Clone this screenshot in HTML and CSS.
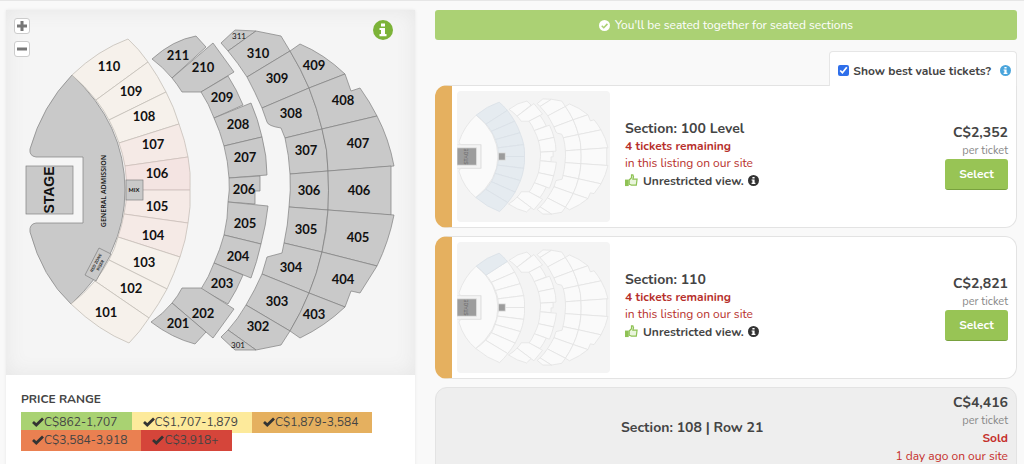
FILE: index.html
```html
<!DOCTYPE html>
<html lang="en">
<head>
  <meta charset="UTF-8">
  <meta name="viewport" content="width=device-width, initial-scale=1.0">
  <title>Select Tickets</title>
  <link rel="stylesheet" href="styles.css">
</head>
<body>
  <!-- shared shapes -->
  <svg class="sprite" width="0" height="0" aria-hidden="true">
    <defs>
      <g id="map-floor">
        <path d="M72 75 Q42 106 30 149 Q29 156 36 157 H83 V223 H36 Q29 224 30 232 Q42 277 71 304 Q125 255 125 190 Q125 124 72 75Z"/>
      </g>
      <path id="s110" d="M72 75 Q98 50 128 39 Q139 49 148 62 L96 100 Q85 86 72 75Z"/>
      <g id="map-100">
        <path d="M96 100 L148 62 Q158 76 166 92 L109 120 Q104 110 96 100Z"/>
        <path d="M109 120 L166 92 Q174 107 179 124 L119 143 Q115 131 109 120Z"/>
        <path d="M119 143 L179 124 Q185 140 188 157 L125 166 Q123 154 119 143Z"/>
        <path d="M125 166 L188 157 Q191 172 190 190 H126 Q127 178 125 166Z"/>
        <path d="M126 190 H190 Q191 207 188 223 L124 214 Q127 203 126 190Z"/>
        <path d="M124 214 L188 223 Q186 240 180 257 L118 237 Q122 226 124 214Z"/>
        <path d="M118 237 L180 257 Q174 274 167 289 L109 260 Q115 249 118 237Z"/>
        <path d="M109 260 L167 289 Q159 304 149 318 L95 281 Q103 271 109 260Z"/>
        <path d="M95 281 L149 318 Q140 332 129 343 Q99 331 71 304 Q84 294 95 281Z"/>
      </g>
      <g id="map-200">
        <path d="M152 59 Q173 40 196 36 L206 47 L172 78 Q163 67 152 59Z"/>
        <path d="M172 78 L213 43 L234 72 L201 92 H182 Q177 84 172 78Z"/>
        <path d="M201 92 L228 76 Q237 90 243 105 L214 118 Q209 104 201 92Z"/>
        <path d="M214 118 L251 103 Q258 119 262 137 L224 146 Q220 131 214 118Z"/>
        <path d="M224 146 L262 137 Q267 156 267 175 L229 178 Q228 161 224 146Z"/>
        <path d="M229 178 L260 176 V191 H255 V204 L228 202 Q230 190 229 178Z"/>
        <path d="M228 202 L268 206 Q266 225 261 244 L224 235 Q228 218 228 202Z"/>
        <path d="M224 235 L261 244 Q257 262 251 278 L214 263 Q220 250 224 235Z"/>
        <path d="M214 263 L243 275 Q237 290 228 304 L201 289 Q209 277 214 263Z"/>
        <path d="M182 288 H201 L234 309 L213 338 L172 303 Q178 296 182 288Z"/>
        <path d="M172 303 L206 332 L195 344 Q172 338 151 322 Q163 314 172 303Z"/>
      </g>
      <g id="map-300">
        <path d="M221 43 L235 30 L256 31 L228 51Z"/>
        <path d="M228 51 L256 31 L281 36 L290 51 L247 77 Q238 63 228 51Z"/>
        <path d="M247 77 L290 51 Q301 69 309 88 L262 108 Q255 92 247 77Z"/>
        <path d="M262 108 L309 88 Q317 108 322 129 L285 138 L281 128 Q268 126 267 122Z"/>
        <path d="M285 138 L322 129 Q328 150 328 171 L290 174 Q289 155 285 138Z"/>
        <path d="M290 174 L328 171 Q329 190 328 210 L289 207 Q291 190 290 174Z"/>
        <path d="M289 207 L328 210 Q326 232 322 252 L284 243 Q288 225 289 207Z"/>
        <path d="M284 243 L322 252 Q317 274 309 293 L262 274 L267 257 L282 253Z"/>
        <path d="M262 274 L309 293 Q301 313 290 331 L246 305 Q255 290 262 274Z"/>
        <path d="M246 305 L290 331 L281 345 L256 350 L228 330 Q238 319 246 305Z"/>
        <path d="M228 330 L256 350 H235 L221 337Z"/>
      </g>
      <g id="map-400">
        <path d="M290 51 L300 44 Q324 54 345 74 L309 88 Q301 69 290 51Z"/>
        <path d="M309 88 L345 74 L351 91 L360 88 Q370 102 377 116 L322 129 Q317 108 309 88Z"/>
        <path d="M322 129 L377 116 Q389 139 394 166 L328 171 Q328 150 322 129Z"/>
        <path d="M328 171 L391 166 V215 L328 210 Q329 190 328 171Z"/>
        <path d="M328 210 L394 215 Q389 241 377 266 L322 252 Q327 231 328 210Z"/>
        <path d="M322 252 L377 266 L360 293 L351 291 L345 307 L309 293 Q317 274 322 252Z"/>
        <path d="M309 293 L345 307 Q325 326 300 338 L290 331 Q301 313 309 293Z"/>
      </g>
      <g id="mini-map">
        <use href="#map-floor"/>
        <use href="#map-200"/>
        <use href="#map-300"/>
        <use href="#map-400"/>
      </g>
      <g id="mini-stage">
        <path class="mini-line" d="M26 157 H84 V223 H26"/>
        <rect class="mini-box" x="25" y="166" width="48" height="48"/>
        <text class="mini-stage-text" transform="translate(49 190) rotate(-90)">STAGE</text>
        <rect class="mini-box" x="126" y="180" width="17" height="20"/>
      </g>
      <symbol id="icon-info" viewBox="0 0 20 20">
        <circle cx="10" cy="10" r="10" fill="currentColor"/>
        <path fill="#fff" d="M8 3.5h4v3H8z M6.5 8H12v6h1.5v2.2h-7V14H8v-4H6.5z"/>
      </symbol>
      <symbol id="icon-check" viewBox="0 0 12 10">
        <path d="M1 5 L4.3 8 L11 1.5" fill="none" stroke="currentColor" stroke-width="2.8"/>
      </symbol>
      <symbol id="icon-thumb" viewBox="0 0 14 14">
        <path fill="#8fc255" d="M0 6h4v7H0z"/>
        <path fill="#e9f5dc" stroke="#8fc255" stroke-width="1.3" d="M4.5 6.5 L7 4 V1 H8.5 L9.2 3 L8.5 5.5 H13 L12.2 12 H7 L4.5 11Z"/>
      </symbol>
    </defs>
  </svg>

  <div class="top-line"></div>
  <main class="page">
    <section class="map-panel">
      <div class="map">
        <div class="zoom">
          <button type="button" aria-label="Zoom in"><svg viewBox="0 0 12 12"><path d="M6 1v10M1 6h10"/></svg></button>
          <button type="button" aria-label="Zoom out"><svg viewBox="0 0 12 12"><path d="M1 6h10"/></svg></button>
        </div>
        <button type="button" class="map-info" aria-label="Map information"><svg><use href="#icon-info"/></svg></button>
        <svg class="seats" viewBox="6 10 409 365" role="img" aria-label="Seating map">
          <g class="grey">
            <use href="#map-floor"/>
            <use href="#map-200"/>
            <use href="#map-300"/>
            <use href="#map-400"/>
          </g>
          <g class="cream">
            <use href="#s110"/>
            <use href="#map-100"/>
          </g>
          <path class="rose" d="M119 143 L179 124 Q191 155 190 190 Q191 224 180 257 L118 237 Q126 214 126 190 Q126 164 119 143Z"/>
          <path class="rose" d="M125 166 L188 157 Q191 172 190 190 H126 Q127 178 125 166Z"/>
          <g class="grey">
            <rect x="26" y="166" width="47" height="48"/>
            <rect x="126" y="180" width="17" height="20"/>
            <path d="M99 248 L111 254 L96 281 L85 275Z"/>
          </g>
          <g class="label">
            <text x="109" y="71">110</text><text x="131" y="96">109</text><text x="144" y="121">108</text>
            <text x="153" y="149">107</text><text x="157" y="178">106</text><text x="157" y="211">105</text>
            <text x="153" y="240">104</text><text x="144" y="267">103</text><text x="131" y="293">102</text><text x="106" y="317">101</text>
            <text x="178" y="60">211</text><text x="203" y="72">210</text><text x="222" y="102">209</text><text x="238" y="129">208</text>
            <text x="245" y="162">207</text><text x="244" y="194">206</text><text x="245" y="228">205</text><text x="238" y="261">204</text>
            <text x="222" y="288">203</text><text x="203" y="318">202</text><text x="178" y="328">201</text>
            <text x="258" y="58">310</text><text x="277" y="83">309</text><text x="291" y="118">308</text><text x="306" y="155">307</text>
            <text x="309" y="195">306</text><text x="306" y="234">305</text><text x="291" y="272">304</text><text x="277" y="306">303</text><text x="258" y="331">302</text>
            <text x="314" y="70">409</text><text x="343" y="105">408</text><text x="358" y="148">407</text><text x="359" y="195">406</text>
            <text x="358" y="242">405</text><text x="343" y="284">404</text><text x="314" y="319">403</text>
          </g>
          <g class="label small">
            <text x="239" y="39">311</text><text x="238" y="348">301</text>
          </g>
          <text class="stage-text" transform="translate(54 190) rotate(-90)">STAGE</text>
          <text class="ga-text" transform="translate(106 191) rotate(-90)">GENERAL ADMISSION</text>
          <text class="mix-text" x="134" y="192">MIX</text>
          <g class="riser-text" transform="translate(98 264) rotate(-62)"><text y="-1">RED ZONE</text><text y="4">RISER</text></g>
        </svg>
      </div>
      <div class="legend">
        <h2>PRICE RANGE</h2>
        <ul>
          <li class="green"><svg><use href="#icon-check"/></svg>C$862-1,707</li>
          <li class="yellow"><svg><use href="#icon-check"/></svg>C$1,707-1,879</li>
          <li class="orange"><svg><use href="#icon-check"/></svg>C$1,879-3,584</li>
          <li class="coral"><svg><use href="#icon-check"/></svg>C$3,584-3,918</li>
          <li class="red"><svg><use href="#icon-check"/></svg>C$3,918+</li>
        </ul>
      </div>
    </section>

    <section class="listings">
      <div class="notice">
        <svg viewBox="0 0 12 12"><circle cx="6" cy="6" r="6" fill="#fff"/><path d="M3 6.2l2.2 2.2 4-4.2" fill="none" stroke="#abd174" stroke-width="1.7"/></svg>
        You'll be seated together for seated sections
      </div>
      <div class="best-value">
        <label><input type="checkbox" checked>Show best value tickets?</label>
        <svg><use href="#icon-info"/></svg>
      </div>

      <article class="ticket first">
        <svg class="thumb" viewBox="25 8 374 364" preserveAspectRatio="none" aria-hidden="true">
          <use href="#mini-map"/>
          <g class="picked"><use href="#s110"/><use href="#map-100"/></g>
          <use href="#mini-stage"/>
        </svg>
        <div class="details">
          <h3>Section: 100 Level</h3>
          <p class="remaining">4 tickets remaining</p>
          <p class="site">in this listing on our site</p>
          <p class="view"><svg class="like"><use href="#icon-thumb"/></svg>Unrestricted view.<svg class="dot"><use href="#icon-info"/></svg></p>
        </div>
        <div class="price">
          <strong>C$2,352</strong>
          <span>per ticket</span>
          <button type="button">Select</button>
        </div>
      </article>

      <article class="ticket">
        <svg class="thumb" viewBox="25 8 374 364" preserveAspectRatio="none" aria-hidden="true">
          <use href="#mini-map"/>
          <use href="#map-100"/>
          <g class="picked"><use href="#s110"/></g>
          <use href="#mini-stage"/>
        </svg>
        <div class="details">
          <h3>Section: 110</h3>
          <p class="remaining">4 tickets remaining</p>
          <p class="site">in this listing on our site</p>
          <p class="view"><svg class="like"><use href="#icon-thumb"/></svg>Unrestricted view.<svg class="dot"><use href="#icon-info"/></svg></p>
        </div>
        <div class="price">
          <strong>C$2,821</strong>
          <span>per ticket</span>
          <button type="button">Select</button>
        </div>
      </article>

      <article class="ticket sold">
        <h3>Section: 108 | Row 21</h3>
        <div class="price">
          <strong>C$4,416</strong>
          <span>per ticket</span>
          <b>Sold</b>
          <em>1 day ago on our site</em>
        </div>
      </article>
    </section>
  </main>
</body>
</html>
```

FILE: styles.css
```css
* {
  box-sizing: border-box;
  margin: 0;
  padding: 0;
}

body {
  font-family: Nunito, Lato, sans-serif;
  font-size: 12px;
  line-height: 18px;
  color: #444;
  background: #f9f9f9;
  height: 100vh;
  overflow: hidden;
}

.sprite {
  position: absolute;
}

.top-line {
  height: 1px;
  background: #e6e6e6;
}

.page {
  display: grid;
  grid-template-columns: 409fr 582fr;
  gap: 20px;
  padding: 9px 7px 0 6px;
}

/* map */
.map-panel {
  background: #fff;
  box-shadow: 0 0 3px rgba(0, 0, 0, 0.08);
}

.map {
  position: relative;
  background: #f5f5f5;
  box-shadow: inset 0 0 20px #e6e6e6;
}

.seats {
  display: block;
  width: 100%;
}

.zoom {
  position: absolute;
  top: 8px;
  left: 8px;
  display: grid;
  gap: 7px;
}

.zoom button {
  width: 16px;
  height: 16px;
  display: grid;
  place-items: center;
  background: #fff;
  border: 1px solid #ccc;
  border-radius: 3px;
}

.zoom svg {
  width: 12px;
  height: 12px;
  stroke: #777;
  stroke-width: 3;
}

.map-info {
  position: absolute;
  top: 10px;
  right: 22px;
  width: 20px;
  height: 20px;
  border: 0;
  background: none;
  color: #7cb338;
}

.map-info svg {
  display: block;
  width: 20px;
  height: 20px;
}

.grey {
  fill: #c9c9c9;
  stroke: #808080;
  stroke-width: 0.7;
}

.cream {
  fill: #f6f1eb;
  stroke: #c4bfb8;
  stroke-width: 0.8;
}

.rose {
  fill: rgba(245, 200, 205, 0.16);
}

.seats text {
  text-anchor: middle;
  fill: #111;
  font-weight: 700;
  stroke: none;
}

.seats .label {
  font-family: Lato, sans-serif;
  font-size: 13px;
}

.seats .small text {
  font-size: 8px;
  font-weight: 400;
}

.seats .stage-text {
  font-size: 14px;
  font-family: "Liberation Sans", sans-serif;
}

.seats .ga-text {
  font-size: 7px;
  font-family: "Open Sans", sans-serif;
  font-weight: 600;
}

.seats .mix-text {
  font-size: 6px;
}

.seats .riser-text {
  font-size: 4px;
}

.legend {
  padding: 15px;
}

.legend h2 {
  font-size: 12px;
  line-height: 18px;
  font-weight: 700;
}

.legend ul {
  display: flex;
  flex-wrap: wrap;
  padding-top: 4px;
  list-style: none;
}

/* rows overlap slightly, later colours sit on top */
.legend li {
  display: flex;
  align-items: center;
  margin-bottom: -3px;
  padding: 1px 14px 2px 11px;
}

.legend svg {
  width: 12px;
  height: 10px;
  color: #333;
}

.green { background: #a9d272; }
.yellow { background: #fdea9b; }
.orange { background: #e5b05f; }
.coral { background: #ea8051; }
.red { background: #d5453a; }

/* listings */
.notice {
  display: flex;
  align-items: center;
  justify-content: center;
  gap: 5px;
  height: 30px;
  background: #abd174;
  border-radius: 3px;
  color: #fff;
}

.notice svg {
  width: 11px;
  height: 11px;
}

.best-value {
  display: flex;
  align-items: center;
  gap: 9px;
  width: max-content;
  height: 35px;
  margin: 11px 0 -1px auto;
  padding: 3px 5px 0 8px;
  position: relative;
  background: #fff;
  border: 1px solid #e6e6e6;
  border-bottom: 0;
  border-radius: 4px 4px 0 0;
  font-weight: 700;
}

.best-value label {
  display: flex;
  align-items: center;
  gap: 4px;
}

.best-value input {
  width: 11px;
  height: 11px;
  accent-color: #2f6fea;
}

.best-value svg {
  width: 11px;
  height: 11px;
  color: #4aa5dc;
}

.ticket {
  display: grid;
  grid-template-columns: 153px 1fr auto;
  align-items: center;
  gap: 15px;
  min-height: 143px;
  margin-bottom: 8px;
  padding: 5px 8px 5px 5px;
  background: #fff;
  border: 1px solid #e3e3e3;
  border-left: 17px solid #e5b05f;
  border-radius: 12px;
}

.ticket.first {
  border-top-right-radius: 0;
}

.thumb {
  width: 153px;
  height: 131px;
  background: #f4f4f4;
  border-radius: 4px;
  fill: #fafafa;
  stroke: #e2e2e2;
  stroke-width: 2;
}

.picked {
  fill: #e5ebf0;
  stroke: #d9e0e6;
}

.mini-line {
  fill: none;
}

.mini-box {
  fill: #9c9c9c;
}

.mini-stage-text {
  fill: #666;
  stroke: none;
  text-anchor: middle;
  dominant-baseline: central;
  font-size: 14px;
}

.details {
  padding-bottom: 4px;
}

.ticket h3 {
  font-size: 14px;
  line-height: 18px;
  font-weight: 700;
}

.remaining {
  font-weight: 700;
  color: #b7302c;
  line-height: 16px;
}

.site {
  color: #b7302c;
}

.view {
  display: flex;
  align-items: center;
  font-weight: 700;
}

.like {
  width: 13px;
  height: 13px;
  margin-right: 5px;
}

.dot {
  width: 11px;
  height: 11px;
  margin-left: 4px;
  color: #333;
}

.price {
  display: flex;
  flex-direction: column;
  align-items: flex-end;
}

.price strong {
  font-size: 14px;
  line-height: 19px;
}

.price span {
  font-size: 11px;
  line-height: 17px;
  color: #888;
}

.price button {
  width: 63px;
  height: 31px;
  border: 0;
  border-bottom: 1px solid #78a13e;
  border-radius: 3px;
  background: #98c455;
  color: #fff;
  font: inherit;
  font-weight: 700;
}

.ticket.sold {
  grid-template-columns: 1fr auto;
  align-items: start;
  gap: 0;
  border-left: 1px solid #e3e3e3;
  background: #eee;
}

.sold h3 {
  padding: 26px 0 0 180px;
}

.price b {
  color: #c52f2b;
}

.price em {
  font-style: normal;
  color: #c52f2b;
}
```
